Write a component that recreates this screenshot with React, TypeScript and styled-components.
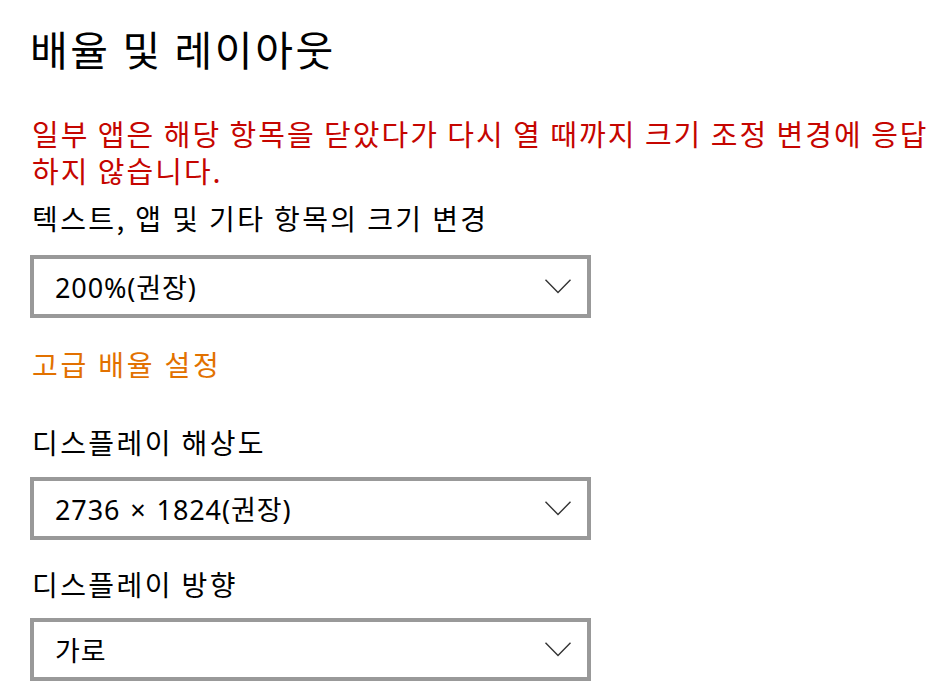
import React from "react";
import styled, { createGlobalStyle } from "styled-components";

const Global = createGlobalStyle`
  html, body { margin: 0; padding: 0; background: #ffffff; }
  body { font-family: "Noto Sans CJK KR", "Noto Sans", sans-serif; color: #000; }
`;

const Page = styled.div`
  display: flex;
  flex-direction: column;
  align-items: flex-start;
  padding: 22px 0 0 30px;
  width: 914px;
  box-sizing: border-box;
`;

const Title = styled.h1`
  margin: 0;
  font-size: 41px;
  font-weight: 400;
  line-height: 52px;
  letter-spacing: 2.6px;
  white-space: nowrap;
`;

const Text = styled.div<{ $color?: string; $mt: number; $ls?: number }>`
  margin-top: ${(p) => p.$mt}px;
  font-size: 28px;
  line-height: 37px;
  letter-spacing: ${(p) => p.$ls ?? 2.4}px;
  color: ${(p) => p.$color ?? "#000"};
  padding-left: 2px;
  white-space: nowrap;
`;

const Warning = styled.div<{ $mt: number }>`
  margin-top: ${(p) => p.$mt}px;
  width: 908px;
  padding-left: 2px;
  font-size: 29px;
  line-height: 37px;
  letter-spacing: 2px;
  color: #c50500;
`;

const Box = styled.div<{ $mt: number }>`
  margin-top: ${(p) => p.$mt}px;
  width: 561px;
  height: 63px;
  box-sizing: border-box;
  border: 4px solid #999999;
  display: flex;
  align-items: center;
  justify-content: space-between;
  padding: 0 16px 0 21px;
  font-family: "Noto Sans", "Noto Sans CJK KR", sans-serif;
  font-size: 27px;
  letter-spacing: 0.9px;
  word-spacing: 2px;
  color: #000;
`;

const Chevron = () => (
  <svg width="26" height="15" viewBox="0 0 26 15">
    <polyline points="0.5,0.8 13,13.5 25.5,0.8" fill="none" stroke="#333" strokeWidth="1.4" />
  </svg>
);

const Dropdown = ({ value, mt }: { value: string; mt: number }) => (
  <Box $mt={mt}>
    <span>{value}</span>
    <Chevron />
  </Box>
);

export default function App() {
  return (
    <>
      <Global />
      <Page>
        <Title>배율 및 레이아웃</Title>
        <Warning $mt={41}>
          일부 앱은 해당 항목을 닫았다가 다시 열 때까지 크기 조정 변경에 응답 하지 않습니다.
        </Warning>
        <Text $mt={11}>텍스트, 앱 및 기타 항목의 크기 변경</Text>
        <Dropdown value="200%(권장)" mt={18} />
        <Text $mt={28} $color="#e27100" $ls={2.8}>고급 배율 설정</Text>
        <Text $mt={41}>디스플레이 해상도</Text>
        <Dropdown value="2736 × 1824(권장)" mt={16} />
        <Text $mt={26}>디스플레이 방향</Text>
        <Dropdown value="가로" mt={15} />
      </Page>
    </>
  );
}
